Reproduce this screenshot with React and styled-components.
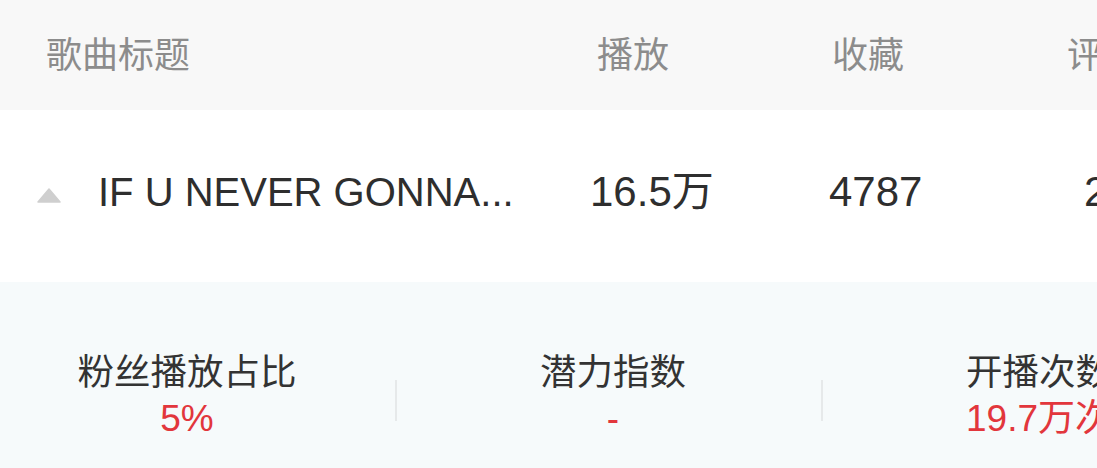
import styled, { createGlobalStyle } from "styled-components";

const GlobalStyle = createGlobalStyle`
  html, body {
    margin: 0;
    padding: 0;
    background: #ffffff;
    overflow: hidden;
  }
  body {
    font-family: "Liberation Sans", "Noto Sans CJK SC", sans-serif;
    -webkit-font-smoothing: antialiased;
  }
`;

const stats = [
  {label: "粉丝播放占比", value: "5%"},
  {label: "潜力指数", value: "-"},
  {label: "开播次数", value: "19.7万次"},
];

export default function App() {
  return (
    <Page>
      <GlobalStyle />
      <HeaderRow>
        <HeadCell>歌曲标题</HeadCell>
        <HeadCell>播放</HeadCell>
        <HeadCell>收藏</HeadCell>
        <HeadCell>评论</HeadCell>
      </HeaderRow>

      <SongRow>
        <TitleCell>
          <Arrow viewBox="0 0 24 15">
            <path d="M12 1 L23 14 L1 14 Z" fill="#cfcfcf" strokeLinejoin="round" stroke="#cfcfcf" strokeWidth="1.5" />
          </Arrow>
          <SongTitle>IF U NEVER GONNA...</SongTitle>
        </TitleCell>
        <ValueCell>16.5万</ValueCell>
        <ValueCell>4787</ValueCell>
        <ValueCell>2</ValueCell>
      </SongRow>

      <StatsPanel>
        <StatsRow>
          {stats.map((s, i) => (
            <StatGroup key={s.label}>
              <Stat>
                <StatLabel>{s.label}</StatLabel>
                <StatValue>{s.value}</StatValue>
              </Stat>
              {i < stats.length - 1 && <Divider />}
            </StatGroup>
          ))}
        </StatsRow>
      </StatsPanel>
    </Page>
  );
}

const Page = styled.div`
  width: 1097px;
  height: 468px;
  overflow: hidden;
  display: flex;
  flex-direction: column;
`;

const HeaderRow = styled.div`
  height: 110px;
  flex: 0 0 110px;
  background: #f8f8f8;
  display: grid;
  grid-template-columns: 551px 235px 235px 1fr;
  align-items: center;
  padding: 0 0 6px 46px;
  box-sizing: border-box;
`;

const HeadCell = styled.div`
  font-family: "Noto Sans CJK SC", sans-serif;
  font-size: 36px;
  color: #8c8c8c;
  white-space: nowrap;
  line-height: 1;
`;

const SongRow = styled.div`
  height: 172px;
  flex: 0 0 172px;
  background: #ffffff;
  display: grid;
  grid-template-columns: 553px 239px 255px 1fr;
  align-items: center;
  padding: 0 0 8px 37px;
  box-sizing: border-box;
`;

const TitleCell = styled.div`
  display: flex;
  align-items: center;
  gap: 37px;
`;

const Arrow = styled.svg`
  width: 24px;
  height: 15px;
  flex: 0 0 24px;
  margin-top: 6px;
`;

const SongTitle = styled.div`
  font-size: 40px;
  color: #2e2e2e;
  white-space: nowrap;
  line-height: 1;
`;

const ValueCell = styled.div`
  font-size: 42px;
  color: #2e2e2e;
  white-space: nowrap;
  line-height: 1;
`;

const StatsPanel = styled.div`
  flex: 1;
  background: #f6fafb;
  padding-top: 67px;
  box-sizing: border-box;
`;

const StatsRow = styled.div`
  display: flex;
  align-items: center;
  margin-left: -21px;
`;

const StatGroup = styled.div`
  display: flex;
  align-items: center;
  flex: 0 0 auto;
`;

const Stat = styled.div`
  width: 416px;
  display: flex;
  flex-direction: column;
  align-items: center;
`;

const StatLabel = styled.div`
  font-family: "Noto Sans CJK SC", sans-serif;
  font-size: 36.5px;
  line-height: 42px;
  color: #333333;
  white-space: nowrap;
`;

const StatValue = styled.div`
  font-size: 37px;
  line-height: 36px;
  margin-top: 10px;
  color: #e2363c;
  white-space: nowrap;
`;

const Divider = styled.div`
  width: 2px;
  height: 41px;
  background: #e6e9ea;
  margin-right: 8px;
  margin-top: 14px;
`;
